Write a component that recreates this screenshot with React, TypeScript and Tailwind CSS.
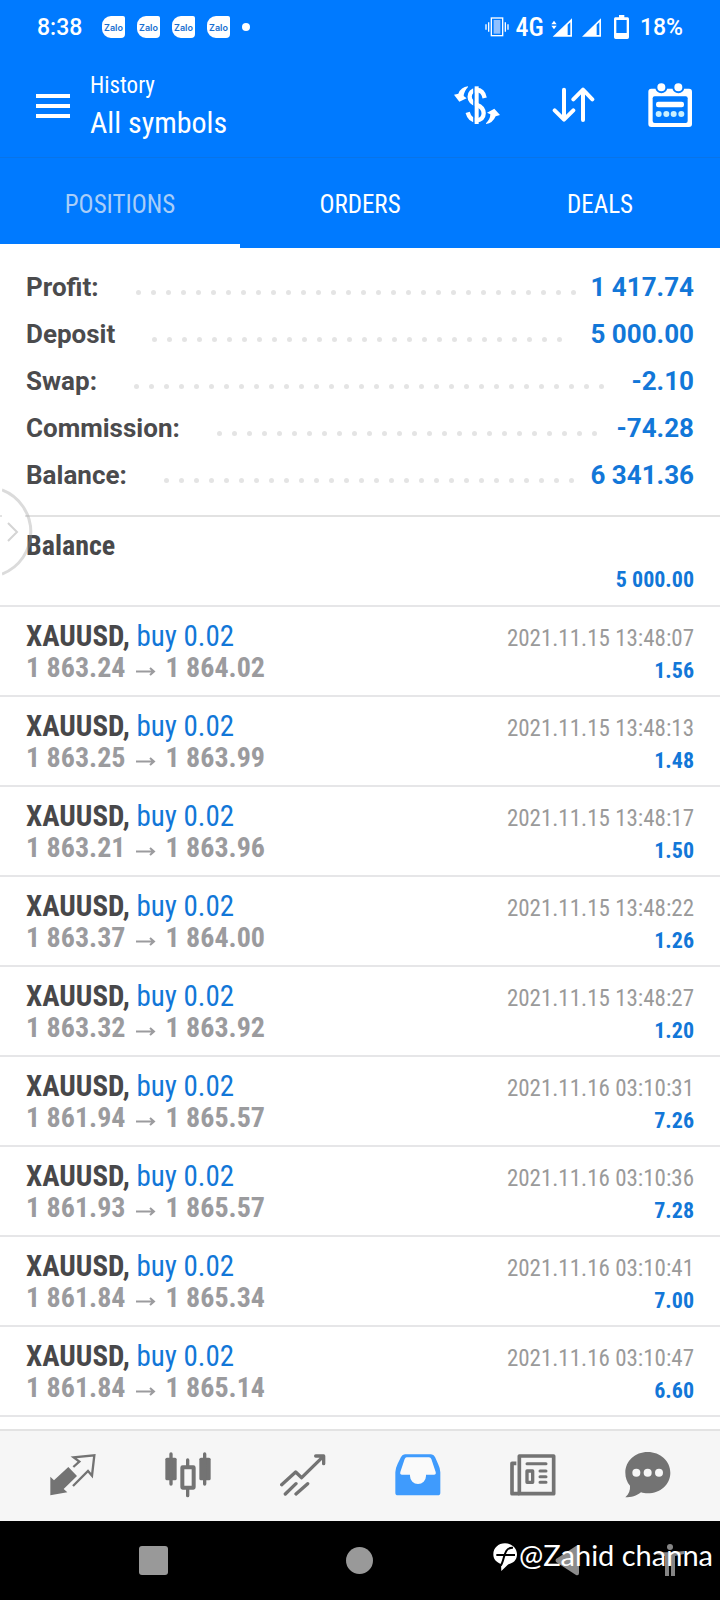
import React from "react";

const condensed = "font-['Roboto_Condensed','Liberation_Sans_Narrow',Roboto,sans-serif]";

const summary = [
  { label: "Profit:", value: "1 417.74" },
  { label: "Deposit", value: "5 000.00" },
  { label: "Swap:", value: "-2.10" },
  { label: "Commission:", value: "-74.28" },
  { label: "Balance:", value: "6 341.36" },
];

const deals = [
  { open: "1 863.24", close: "1 864.02", time: "2021.11.15 13:48:07", profit: "1.56" },
  { open: "1 863.25", close: "1 863.99", time: "2021.11.15 13:48:13", profit: "1.48" },
  { open: "1 863.21", close: "1 863.96", time: "2021.11.15 13:48:17", profit: "1.50" },
  { open: "1 863.37", close: "1 864.00", time: "2021.11.15 13:48:22", profit: "1.26" },
  { open: "1 863.32", close: "1 863.92", time: "2021.11.15 13:48:27", profit: "1.20" },
  { open: "1 861.94", close: "1 865.57", time: "2021.11.16 03:10:31", profit: "7.26" },
  { open: "1 861.93", close: "1 865.57", time: "2021.11.16 03:10:36", profit: "7.28" },
  { open: "1 861.84", close: "1 865.34", time: "2021.11.16 03:10:41", profit: "7.00" },
  { open: "1 861.84", close: "1 865.14", time: "2021.11.16 03:10:47", profit: "6.60" },
];

function ZaloBadge() {
  return (
    <span className="flex h-[22px] w-[23px] items-center justify-center rounded-l-[9px] rounded-tr-[2px] rounded-br-[4px] bg-white font-[Inter,sans-serif] text-[9px] leading-none font-semibold text-[#1a6fd0]">
      Zalo
    </span>
  );
}

function StatusBar() {
  return (
    <div className="flex h-[54px] items-center justify-between pr-[37px] pl-[37px] text-[24px] leading-none font-medium">
      <div className="flex items-center">
        <span className="w-[65px] text-[23px]">8:38</span>
        <div className="flex gap-3">
          <ZaloBadge />
          <ZaloBadge />
          <ZaloBadge />
          <ZaloBadge />
        </div>
        <span className="ml-3 size-2 rounded-full bg-white" />
      </div>
      <div className="flex items-center">
        <svg className="h-5 w-6" viewBox="378 50 72 60" fill="none" stroke="#fff" strokeWidth="4" aria-hidden="true">
          <rect x="397" y="53" width="34" height="53" fill="none" />
          <rect x="404" y="59" width="20" height="41" fill="#8fc0ff" stroke="none" />
          <path d="M389 66V94M381 72V88M439 66V94M447 72V88" />
        </svg>
        <span className={`${condensed} ml-[7px] text-[26px]`}>4G</span>
        <svg className="ml-[7px] h-[19px] w-[21px]" viewBox="573 52 63 57" aria-hidden="true">
          <path d="M578 108L636 53V108Z" fill="#fff" />
          <path d="M623 72L631 65V103H623Z" fill="#007aff" />
          <path d="M582 60L590 71H574ZM582 86L574 75H590Z" fill="#fff" />
        </svg>
        <svg className="ml-[10px] h-[19px] w-[19px]" viewBox="666 52 57 57" aria-hidden="true">
          <path d="M666 108L723 53V108Z" fill="#fff" />
          <path d="M710 72L718 65V103H710Z" fill="#007aff" />
        </svg>
        <svg className="ml-[13px] h-6 w-[15px]" viewBox="762 42 45 72" aria-hidden="true">
          <path d="M777 42H793V49H803Q807 49 807 54V109Q807 114 802 114H767Q762 114 762 109V54Q762 49 766 49H777Z" fill="#fff" />
          <rect x="769" y="57" width="31" height="39" fill="#007aff" />
        </svg>
        <span className="ml-[11px] text-[23px]">18%</span>
      </div>
    </div>
  );
}

function Header() {
  return (
    <div className="flex h-[103px] items-start pr-[27px] pl-9">
      <button type="button" aria-label="Menu" className="mt-10 flex h-6 w-[34px] flex-col justify-between">
        <span className="h-1 w-full bg-white" />
        <span className="h-1 w-full bg-white" />
        <span className="h-1 w-full bg-white" />
      </button>
      <h1 className={`${condensed} mt-[18px] ml-[20px] flex-1 font-normal`}>
        <span className="block text-[23px] leading-[28px]">History</span>
        <span className="mt-[3px] block text-[30px] leading-[40px]">All symbols</span>
      </h1>
      <div className="mt-7 flex items-center gap-[52px]">
        <button type="button" aria-label="Filter by symbol">
          <svg className="h-[46px] w-[46px]" viewBox="284 247 138 138" fill="none">
            <path d="M376 295C373 279 363 271 352 271C338 271 331 280 331 291C331 304 340 310 352 315C366 320 373 328 373 341C373 354 364 362 352 362C338 362 329 353 325 338" stroke="#fff" strokeWidth="13" />
            <path d="M344 260V373" stroke="#007aff" strokeWidth="5" />
            <path d="M352 260V373" stroke="#fff" strokeWidth="12" />
            <path d="M326 260Q305 262 297 282L284 285L300 306L322 296L313 289Q314 275 326 262Z" fill="#fff" />
            <path d="M380 373Q400 371 409 350L422 346L405 327L383 339L393 344Q393 358 380 371Z" fill="#fff" />
          </svg>
        </button>
        <button type="button" aria-label="Sort">
          <svg className="h-[36px] w-[43px]" viewBox="579 263 129 108" fill="none" stroke="#fff" strokeWidth="12" strokeLinecap="round" strokeLinejoin="round">
            <path d="M615 271V359M587 333L615 361L643 333M672 362V274M643 300L672 271L700 300" />
          </svg>
        </button>
        <button type="button" aria-label="Choose period">
          <svg className="h-[46px] w-[46px]" viewBox="863 246 138 138">
            <rect x="867" y="266" width="131" height="115" rx="9" fill="#fff" />
            <rect x="880" y="289" width="105" height="80" rx="6" fill="#007aff" />
            <circle cx="906" cy="262" r="15" fill="#fff" stroke="#007aff" strokeWidth="6" />
            <circle cx="957" cy="262" r="15" fill="#fff" stroke="#007aff" strokeWidth="6" />
            <rect x="890" y="305" width="84" height="17" rx="7" fill="#fff" />
            <g fill="#c9f0ff">
              <circle cx="898" cy="342" r="9" />
              <circle cx="921" cy="342" r="9" />
              <circle cx="943" cy="342" r="9" />
              <circle cx="966" cy="342" r="9" />
            </g>
          </svg>
        </button>
      </div>
    </div>
  );
}

function Tabs() {
  const base = "border-b-4 pt-[6px] text-center text-[25px] leading-none";
  return (
    <div role="tablist" className={`${condensed} grid h-[91px] grid-cols-3 border-t border-[#0874e8]`}>
      <button type="button" role="tab" aria-selected="true" className={`${base} border-white text-[#a9cdf8]`}>POSITIONS</button>
      <button type="button" role="tab" aria-selected="false" className={`${base} border-transparent text-white`}>ORDERS</button>
      <button type="button" role="tab" aria-selected="false" className={`${base} border-transparent text-white`}>DEALS</button>
    </div>
  );
}

function Dots() {
  return (
    <span aria-hidden="true" className="mt-[10px] mr-[14px] ml-[37px] flex h-[5px] flex-1 flex-wrap gap-x-[10px] overflow-hidden">
      {Array.from({ length: 60 }, (_, i) => (
        <span key={i} className="size-[5px] rounded-full bg-[#e4e4e4]" />
      ))}
    </span>
  );
}

function Summary() {
  return (
    <dl className="border-b-2 border-[#e2e2e2] px-[26px] pt-4 pb-4 text-[26px] leading-[47px] font-bold">
      {summary.map((row) => (
        <div key={row.label} className="flex h-[47px] items-center">
          <dt className="text-[#4b4b4d]">{row.label}</dt>
          <Dots />
          <dd className="text-[#1277d8]">{row.value}</dd>
        </div>
      ))}
    </dl>
  );
}

function DealList() {
  return (
    <ul className={`${condensed} flex-1 pb-3`}>
      <li className="flex h-[90px] justify-between border-b-2 border-[#e6e6e8] px-[26px]">
        <span className="pt-[11px] text-[28px] leading-[36px] font-bold text-[#48484a]">Balance</span>
        <span className="pt-[48px] text-[22px] leading-[30px] font-bold text-[#1277d8]">5 000.00</span>
      </li>
      {deals.map((deal) => (
        <li key={deal.time} className="flex h-[90px] justify-between border-b-2 border-[#e6e6e8] px-[26px] pt-[13px]">
          <div className="leading-[32px]">
            <p className="text-[29px] text-[#1277d8]">
              <span className="font-bold text-[#48484a]">XAUUSD,</span> buy 0.02
            </p>
            <p className="flex text-[28px] font-bold text-[#9b9b9e]">
              {deal.open}
              <svg className="mx-[10px] mt-[15px] h-[9px] w-5" viewBox="0 0 20 9" fill="none" stroke="#9b9b9e" strokeWidth="2" role="img" aria-label="to">
                <path d="M0 4.5H18M14 1L18 4.5L14 8" />
              </svg>
              {deal.close}
            </p>
          </div>
          <div className="pt-[3px] text-right leading-[32px]">
            <p className="text-[23px] text-[#9a9a9a]">{deal.time}</p>
            <p className="text-[22px] font-bold text-[#1277d8]">{deal.profit}</p>
          </div>
        </li>
      ))}
    </ul>
  );
}

function NavItem({ label, active, children }: { label: string; active?: boolean; children: React.ReactNode }) {
  return (
    <button type="button" aria-label={label} aria-current={active ? "page" : undefined} className="flex items-center justify-center">
      {children}
    </button>
  );
}

function BottomNav() {
  return (
    <nav className="grid h-[92px] grid-cols-6 border-t-2 border-[#e3e3e3] bg-[#f6f6f6] px-[15px] pb-[2px]">
      <NavItem label="Quotes">
        <svg className="size-[46px]" viewBox="149 155 138 138" fill="none">
          <path d="M150 229L161 240L204 200L230 227L190 266L201 276L150 285Z" fill="#737373" />
          <path d="M219 200L237 184L220 171L282 165L275 226L263 212L218 257" stroke="#737373" strokeWidth="7" />
        </svg>
      </NavItem>
      <NavItem label="Charts">
        <svg className="size-[46px]" viewBox="494 155 138 138" fill="none">
          <rect x="495" y="172" width="34" height="68" rx="5" fill="#737373" />
          <rect x="597" y="172" width="34" height="68" rx="5" fill="#737373" />
          <rect x="546" y="201" width="34" height="61" rx="1" stroke="#737373" strokeWidth="12" />
          <path d="M512 161V251M613 161V251M562 179V196M562 267V286" stroke="#737373" strokeWidth="10" strokeLinecap="round" />
        </svg>
      </NavItem>
      <NavItem label="Trade">
        <svg className="size-[46px]" viewBox="839 155 138 138" fill="none" stroke="#737373" strokeWidth="10" strokeLinecap="round" strokeLinejoin="round">
          <path d="M844 253L886 215L904 232L969 168M946 167H970V190M855 281L887 250M887 281L922 250" />
        </svg>
      </NavItem>
      <NavItem label="History" active>
        <svg className="size-[46px]" viewBox="104 155 138 138">
          <path d="M134 162H212Q220 162 224 170L233 190Q240 204 240 216V277Q240 285 232 285H113Q105 285 105 277V216Q105 204 112 190L122 170Q126 162 134 162Z" fill="#3f9bfd" />
          <path d="M139 171H206Q211 171 213 176L226 215Q228 223 221 223H197V227A24 24 0 0 1 149 227V223H125Q118 223 120 215L133 176Q135 171 139 171Z" fill="#fafafa" />
        </svg>
      </NavItem>
      <NavItem label="News">
        <svg className="size-[46px]" viewBox="449 155 138 138" fill="none" stroke="#737373" strokeWidth="11" strokeLinejoin="round">
          <rect x="477" y="167" width="103" height="113" />
          <path d="M468 189H455V280H477" />
          <path d="M500 190H557M539 212H557M539 229H557M539 246H557" strokeWidth="9" strokeLinecap="round" />
          <rect x="500" y="212" width="17" height="34" strokeWidth="10" />
        </svg>
      </NavItem>
      <NavItem label="Messages">
        <svg className="size-[46px]" viewBox="794 155 138 138">
          <path d="M862 155C900 155 930 182 930 217S900 279 862 279C854 279 848 278 842 276C829 287 812 291 795 291C806 281 810 270 809 256C800 245 795 232 795 217C795 182 824 155 862 155Z" fill="#737373" />
          <g fill="#f6f6f6">
            <circle cx="828" cy="217" r="12" />
            <circle cx="862" cy="217" r="12" />
            <circle cx="896" cy="217" r="12" />
          </g>
        </svg>
      </NavItem>
    </nav>
  );
}

function SystemBar() {
  return (
    <div className="relative h-[79px] bg-black">
      <div className="grid h-full grid-cols-3 px-[50px]">
        <button type="button" aria-label="Recent apps" className="flex items-center justify-center">
          <span className="size-[29px] rounded-[3px] bg-[#999]" />
        </button>
        <button type="button" aria-label="Home" className="flex items-center justify-center">
          <span className="size-[27px] rounded-full bg-[#999]" />
        </button>
        <button type="button" aria-label="Back" className="flex items-center justify-center">
          <svg className="h-[31px] w-6" viewBox="0 0 24 31">
            <path d="M1 14L21 1Q24 0 24 3V28Q24 31 21 30L1 17Q0 15 1 14Z" fill="#8c8c8c" />
          </svg>
        </button>
      </div>
      <button type="button" aria-label="Accessibility" className="absolute top-[23px] right-[36px]">
        <svg className="h-[33px] w-7" viewBox="0 0 28 33" fill="#858585">
          <circle cx="14" cy="3" r="3" />
          <path d="M0 8Q14 9 28 7V10L19 12V32H15V21H13V32H9V12L0 10Z" />
        </svg>
      </button>
      <div className="absolute top-[17px] right-[7px] flex items-center text-white">
        <svg className="mt-[3px] h-[28px] w-6" viewBox="404 432 72 84" aria-hidden="true">
          <path d="M440 433C461 433 476 447 476 466C476 484 464 493 450 496L429 516L428 495C413 490 405 480 405 466C405 447 420 433 440 433Z" fill="#fff" />
          <path d="M414 468H470M427 500C440 484 434 444 464 446" stroke="#000" strokeWidth="6" fill="none" />
        </svg>
        <span className="ml-[2px] font-[Lato,sans-serif] text-[29px] leading-[34px]">@Zahid channa</span>
      </div>
    </div>
  );
}

export default function App() {
  return (
    <div className="relative flex min-h-screen flex-col bg-white font-[Roboto,sans-serif]">
      <header className="bg-[#007aff] text-white">
        <StatusBar />
        <Header />
        <Tabs />
      </header>
      <main className="relative flex flex-1 flex-col">
        <Summary />
        <DealList />
        <button type="button" aria-label="Open side panel" className="absolute top-[240px] left-[2px]">
          <svg className="h-[88px] w-8" viewBox="0 0 32 88" fill="none">
            <path d="M0 2A45 45 0 0 1 23 26V30H0Z" fill="#fff" />
            <path d="M0 2A45 45 0 0 1 0 86" stroke="#999" strokeOpacity="0.35" strokeWidth="3" />
            <path d="M6 35L15 44L6 53" stroke="#d4d4d4" strokeWidth="2" />
          </svg>
        </button>
      </main>
      <BottomNav />
      <SystemBar />
    </div>
  );
}
